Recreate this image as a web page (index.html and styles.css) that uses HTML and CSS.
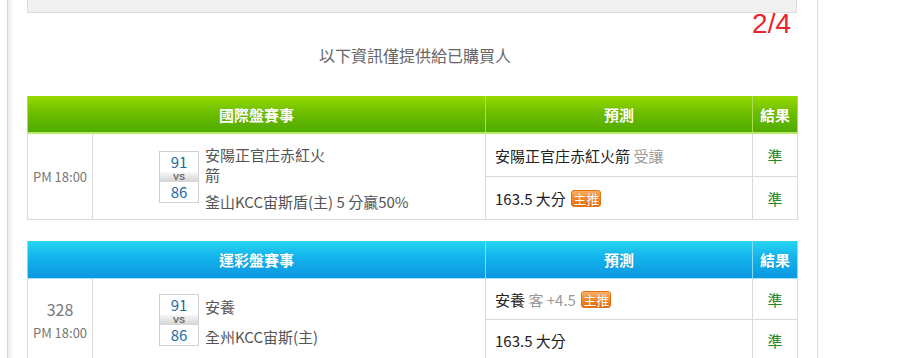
FILE: index.html
```html
<!DOCTYPE html>
<html lang="zh-Hant">
<head>
<meta charset="utf-8">
<link rel="stylesheet" href="styles.css">
</head>
<body>
<div class="page">
  <div class="topbox"></div>
  <div class="pager">2/4</div>
  <div class="notice">以下資訊僅提供給已購買人</div>

  <table class="match green">
    <colgroup><col class="c1"><col class="c2"><col class="c3"><col class="c4"></colgroup>
    <thead>
      <tr><th colspan="2">國際盤賽事</th><th>預測</th><th>結果</th></tr>
    </thead>
    <tbody>
      <tr class="r43">
        <td rowspan="2" class="time"><div class="tm">PM 18:00</div></td>
        <td rowspan="2" class="game">
          <div class="vsrow">
            <div class="scorebox"><div class="sc">91</div><div class="vs">VS</div><div class="sc">86</div></div>
            <div class="teams"><div class="team t1">安陽正官庄赤紅火箭</div><div class="team">釜山KCC宙斯盾(主) 5 分贏50%</div></div>
          </div>
        </td>
        <td class="pred">安陽正官庄赤紅火箭 <span class="muted">受讓</span></td>
        <td class="res">準</td>
      </tr>
      <tr class="r43">
        <td class="pred">163.5 大分 <span class="badge">主推</span></td>
        <td class="res">準</td>
      </tr>
    </tbody>
  </table>

  <table class="match blue">
    <colgroup><col class="c1"><col class="c2"><col class="c3"><col class="c4"></colgroup>
    <thead>
      <tr><th colspan="2">運彩盤賽事</th><th>預測</th><th>結果</th></tr>
    </thead>
    <tbody>
      <tr class="r41">
        <td rowspan="2" class="time"><div class="num">328</div><div class="tm">PM 18:00</div></td>
        <td rowspan="2" class="game">
          <div class="vsrow">
            <div class="scorebox"><div class="sc">91</div><div class="vs">VS</div><div class="sc">86</div></div>
            <div class="teams two"><div class="team">安養</div><div class="team">全州KCC宙斯(主)</div></div>
          </div>
        </td>
        <td class="pred">安養 <span class="muted">客 +4.5</span> <span class="badge">主推</span></td>
        <td class="res">準</td>
      </tr>
      <tr class="r41">
        <td class="pred">163.5 大分</td>
        <td class="res">準</td>
      </tr>
    </tbody>
  </table>
</div>
</body>
</html>
```

FILE: styles.css
```css
html, body {
  margin: 0;
  padding: 0;
  background: #fff;
  font-family: "Noto Sans CJK TC", "Noto Sans", sans-serif;
}

.page {
  margin-left: 7px;
  width: 811px;
  box-sizing: border-box;
  min-height: 358px;
  padding: 0 20px 0 19px;
  border-left: 1px solid #d6d6d6;
  border-right: 1px solid #dcdcdc;
  background: linear-gradient(to right, #ececec 0, #fafafa 4px, #fff 6px);
}

.topbox {
  height: 13px;
  box-sizing: border-box;
  background: #f0f0f0;
  border: 1px solid #dcdcdc;
  border-top: none;
}

.pager {
  text-align: right;
  padding-right: 6px;
  font-family: "Liberation Sans", sans-serif;
  font-size: 28px;
  line-height: 21px;
  height: 21px;
  color: #e8262d;
}

.notice {
  margin-top: 11px;
  text-align: center;
  font-size: 16px;
  line-height: 20px;
  color: #666;
  padding-left: 6px;
}

.match {
  width: 770px;
  border-collapse: collapse;
  table-layout: fixed;
  margin-top: 31px;
}
.match + .match { margin-top: 21px; }

.c1 { width: 65px; }
.c2 { width: 393px; }
.c3 { width: 267px; }
.c4 { width: 45px; }

.match th {
  height: 36px;
  padding: 0;
  color: #fff;
  font-size: 15px;
  font-weight: bold;
  text-align: center;
  text-shadow: 0 0 1px rgba(0,0,0,0.15);
}
.green th {
  background: linear-gradient(to bottom, #96da00 0%, #6ebe00 45%, #4fab00 100%);
  border-left: 1px solid #a9de55;
  border-right: 1px solid #a9de55;
  border-bottom: 2px solid #b6e96c;
}
.blue th {
  height: 37px;
  background: linear-gradient(to bottom, #27d4f2 0%, #13b2ea 45%, #0a97e1 100%);
  border-left: 1px solid #86dcf4;
  border-right: 1px solid #86dcf4;
  border-bottom: 1px solid #9fe3f6;
}

.match td {
  border: 1px solid #dadada;
  padding: 0;
  vertical-align: middle;
}
.r43 td { height: 42px; }
.r41 td { height: 40px; }

.time {
  text-align: center;
  color: #777;
}
.tm { font-size: 13px; line-height: 18px; }
.num { font-size: 16px; line-height: 22px; margin-bottom: 4px; color: #777; }

.vsrow {
  display: flex;
  align-items: center;
  padding-left: 66px;
}
.scorebox {
  width: 40px;
  box-sizing: border-box;
  border: 1px solid #cfcfcf;
  flex: none;
  display: flex;
  flex-direction: column;
}
.sc {
  height: 20px;
  line-height: 20px;
  text-align: center;
  font-size: 15px;
  color: #1d6aa5;
  background: #fff;
}
.vs {
  height: 10px;
  line-height: 10px;
  text-align: center;
  font-family: "Liberation Sans", sans-serif;
  font-size: 9px;
  font-weight: bold;
  color: #666;
  background: linear-gradient(to bottom, #f7f7f7, #d4d4d4);
}
.teams {
  margin-left: 6px;
  display: flex;
  flex-direction: column;
  gap: 7px;
  padding-top: 3px;
}
.teams.two { gap: 10px; padding-top: 5px; }
.team {
  font-size: 15px;
  line-height: 20px;
  color: #555;
}
.t1 { max-width: 128px; }

.pred {
  padding-left: 9px !important;
  font-size: 15px;
  color: #222;
  white-space: nowrap;
}
.muted { color: #9a9a9a; }

.badge {
  display: inline-block;
  vertical-align: 1px;
  width: 30px;
  height: 17px;
  box-sizing: border-box;
  margin-left: 2px;
  line-height: 15px;
  text-align: center;
  font-size: 13px;
  color: #fff;
  border: 1px solid #e0731a;
  border-radius: 3px;
  background: linear-gradient(to bottom, #fbb064 0%, #f28a2a 50%, #e66e10 100%);
  text-shadow: 0 0 1px rgba(150,60,0,0.5);
}

.res {
  text-align: center;
  font-size: 15px;
  color: #218a30;
}
```
